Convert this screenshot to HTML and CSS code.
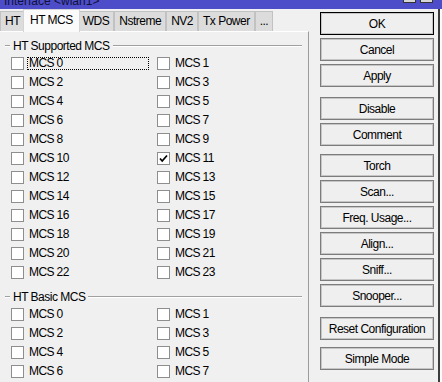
FILE: index.html
```html
<!DOCTYPE html>
<html>
<head>
    <title>Interface &lt;wlan1&gt;</title>
    <link rel="stylesheet" href="styles.css">
</head>
<body>
    <div class="window">
        <div class="titlebar">
            <span class="title">Interface &lt;wlan1&gt;</span>
            <div class="title-btns">
                <span class="tbtn"></span>
                <span class="tbtn"></span>
            </div>
        </div>

        <div class="main">
            <div class="tabs-area">
                <div class="tab-strip">
                    <div class="tab">HT</div>
                    <div class="tab active">HT MCS</div>
                    <div class="tab">WDS</div>
                    <div class="tab">Nstreme</div>
                    <div class="tab">NV2</div>
                    <div class="tab">Tx Power</div>
                    <div class="tab">...</div>
                </div>

                <div class="panel">
                    <div class="group-title">
                        <span class="dash"></span>
                        <span class="group-label">HT Supported MCS</span>
                        <span class="rule"></span>
                    </div>
                    <div class="mcs-grid">
                        <div class="cb"><span class="box"></span><span class="txt focus">MCS 0</span></div>
                        <div class="cb"><span class="box"></span><span class="txt">MCS 1</span></div>
                        <div class="cb"><span class="box"></span><span class="txt">MCS 2</span></div>
                        <div class="cb"><span class="box"></span><span class="txt">MCS 3</span></div>
                        <div class="cb"><span class="box"></span><span class="txt">MCS 4</span></div>
                        <div class="cb"><span class="box"></span><span class="txt">MCS 5</span></div>
                        <div class="cb"><span class="box"></span><span class="txt">MCS 6</span></div>
                        <div class="cb"><span class="box"></span><span class="txt">MCS 7</span></div>
                        <div class="cb"><span class="box"></span><span class="txt">MCS 8</span></div>
                        <div class="cb"><span class="box"></span><span class="txt">MCS 9</span></div>
                        <div class="cb"><span class="box"></span><span class="txt">MCS 10</span></div>
                        <div class="cb">
                            <span class="box">
                                <svg width="11" height="11" viewBox="0 0 11 11"><polyline points="2,5.5 4.2,8 9,2.5" fill="none" stroke="#000" stroke-width="1.7"/></svg>
                            </span>
                            <span class="txt">MCS 11</span>
                        </div>
                        <div class="cb"><span class="box"></span><span class="txt">MCS 12</span></div>
                        <div class="cb"><span class="box"></span><span class="txt">MCS 13</span></div>
                        <div class="cb"><span class="box"></span><span class="txt">MCS 14</span></div>
                        <div class="cb"><span class="box"></span><span class="txt">MCS 15</span></div>
                        <div class="cb"><span class="box"></span><span class="txt">MCS 16</span></div>
                        <div class="cb"><span class="box"></span><span class="txt">MCS 17</span></div>
                        <div class="cb"><span class="box"></span><span class="txt">MCS 18</span></div>
                        <div class="cb"><span class="box"></span><span class="txt">MCS 19</span></div>
                        <div class="cb"><span class="box"></span><span class="txt">MCS 20</span></div>
                        <div class="cb"><span class="box"></span><span class="txt">MCS 21</span></div>
                        <div class="cb"><span class="box"></span><span class="txt">MCS 22</span></div>
                        <div class="cb"><span class="box"></span><span class="txt">MCS 23</span></div>
                    </div>

                    <div class="group-title second">
                        <span class="dash"></span>
                        <span class="group-label">HT Basic MCS</span>
                        <span class="rule"></span>
                    </div>
                    <div class="mcs-grid">
                        <div class="cb"><span class="box"></span><span class="txt">MCS 0</span></div>
                        <div class="cb"><span class="box"></span><span class="txt">MCS 1</span></div>
                        <div class="cb"><span class="box"></span><span class="txt">MCS 2</span></div>
                        <div class="cb"><span class="box"></span><span class="txt">MCS 3</span></div>
                        <div class="cb"><span class="box"></span><span class="txt">MCS 4</span></div>
                        <div class="cb"><span class="box"></span><span class="txt">MCS 5</span></div>
                        <div class="cb"><span class="box"></span><span class="txt">MCS 6</span></div>
                        <div class="cb"><span class="box"></span><span class="txt">MCS 7</span></div>
                    </div>
                </div>
            </div>

            <div class="buttons">
                <button class="btn default">OK</button>
                <button class="btn">Cancel</button>
                <button class="btn">Apply</button>
                <button class="btn sep-disable">Disable</button>
                <button class="btn">Comment</button>
                <button class="btn sep-torch">Torch</button>
                <button class="btn">Scan...</button>
                <button class="btn">Freq. Usage...</button>
                <button class="btn">Align...</button>
                <button class="btn">Sniff...</button>
                <button class="btn">Snooper...</button>
                <button class="btn sep-reset">Reset Configuration</button>
                <button class="btn sep-simple">Simple Mode</button>
            </div>

            <div class="edge"></div>
            <div class="outside"></div>
        </div>
    </div>
</body>
</html>
```

FILE: styles.css
```css
body {
    margin: 0;
    font-family: "Liberation Sans", Arial, sans-serif;
    font-size: 12px;
    letter-spacing: -0.5px;
    color: #000;
}
.window {
    width: 442px;
    height: 382px;
    overflow: hidden;
    background: #f0f0f0;
}
.titlebar {
    height: 9px;
    background: #4d4dc9;
    display: flex;
    overflow: hidden;
}
.title {
    line-height: 14px;
    margin-top: -6px;
    margin-left: 4px;
    letter-spacing: 0;
    color: #10103a;
}
.title-btns {
    display: flex;
    gap: 4px;
    margin-left: auto;
    margin-right: 9px;
    margin-top: -10px;
}
.tbtn {
    width: 11px;
    height: 11px;
    background: #d6d6d6;
    border: 1px solid #333;
}
.main {
    display: flex;
    height: 373px;
}
.tabs-area {
    width: 309px;
    display: flex;
    flex-direction: column;
}
.tab-strip {
    height: 22px;
    display: flex;
    align-items: flex-end;
}
.tab {
    height: 19px;
    line-height: 19px;
    padding: 0 4px;
    background: #dcdcdc;
    border: 1px solid #c2c2c2;
    border-bottom: 0;
    white-space: nowrap;
}
.tab.active {
    position: relative;
    z-index: 1;
    height: 22px;
    line-height: 20px;
    margin: 0 -2px -1px;
    padding: 0 6px;
    background: #fafafa;
    border-color: #d4d4d4;
}
.panel {
    flex: 1;
    border-top: 1px solid #fff;
    border-right: 1px solid #9c9c9c;
}
.group-title {
    display: flex;
    align-items: center;
    height: 13px;
    margin-top: 7px;
    margin-bottom: 2px;
}
.group-title.second {
    margin-top: 8px;
}
.dash, .rule {
    height: 1px;
    background: #a0a0a0;
    box-shadow: 0 1px 0 #fff;
}
.dash {
    width: 5px;
    margin-left: 5px;
}
.group-label {
    margin: 0 3px;
    white-space: nowrap;
}
.rule {
    flex: 1;
    margin-right: 6px;
}
.mcs-grid {
    display: grid;
    grid-template-columns: 146px 146px;
    grid-auto-rows: 19px;
    padding-left: 11px;
}
.cb {
    display: flex;
    align-items: center;
}
.box {
    width: 11px;
    height: 11px;
    border: 1px solid #8e8e8e;
    background: #fff;
    display: flex;
}
.txt {
    margin-left: 3px;
    padding: 0 1px;
    border: 1px solid transparent;
    line-height: 11px;
    letter-spacing: -0.6px;
    white-space: nowrap;
}
.txt.focus {
    flex: 1;
    margin-right: 8px;
    border: 1px dotted #000;
}
.buttons {
    width: 114px;
    margin-left: 11px;
    padding-top: 3px;
    display: flex;
    flex-direction: column;
    gap: 3px;
}
.btn {
    height: 23px;
    padding: 0;
    font: inherit;
    letter-spacing: inherit;
    color: #000;
    background: #efefef;
    border: 1px solid #7c7c7c;
    box-shadow: inset 0 0 0 1px #c6c6c6;
    border-radius: 0;
}
.btn.default {
    border-color: #000;
}
.sep-disable {
    margin-top: 7px;
}
.sep-torch {
    margin-top: 5px;
}
.sep-reset {
    margin-top: 7px;
}
.sep-simple {
    margin-top: 4px;
}
.edge {
    width: 2px;
    margin-left: 4px;
    background: #3c3c3c;
}
.outside {
    flex: 1;
    background: #fbfbfb;
}
```
